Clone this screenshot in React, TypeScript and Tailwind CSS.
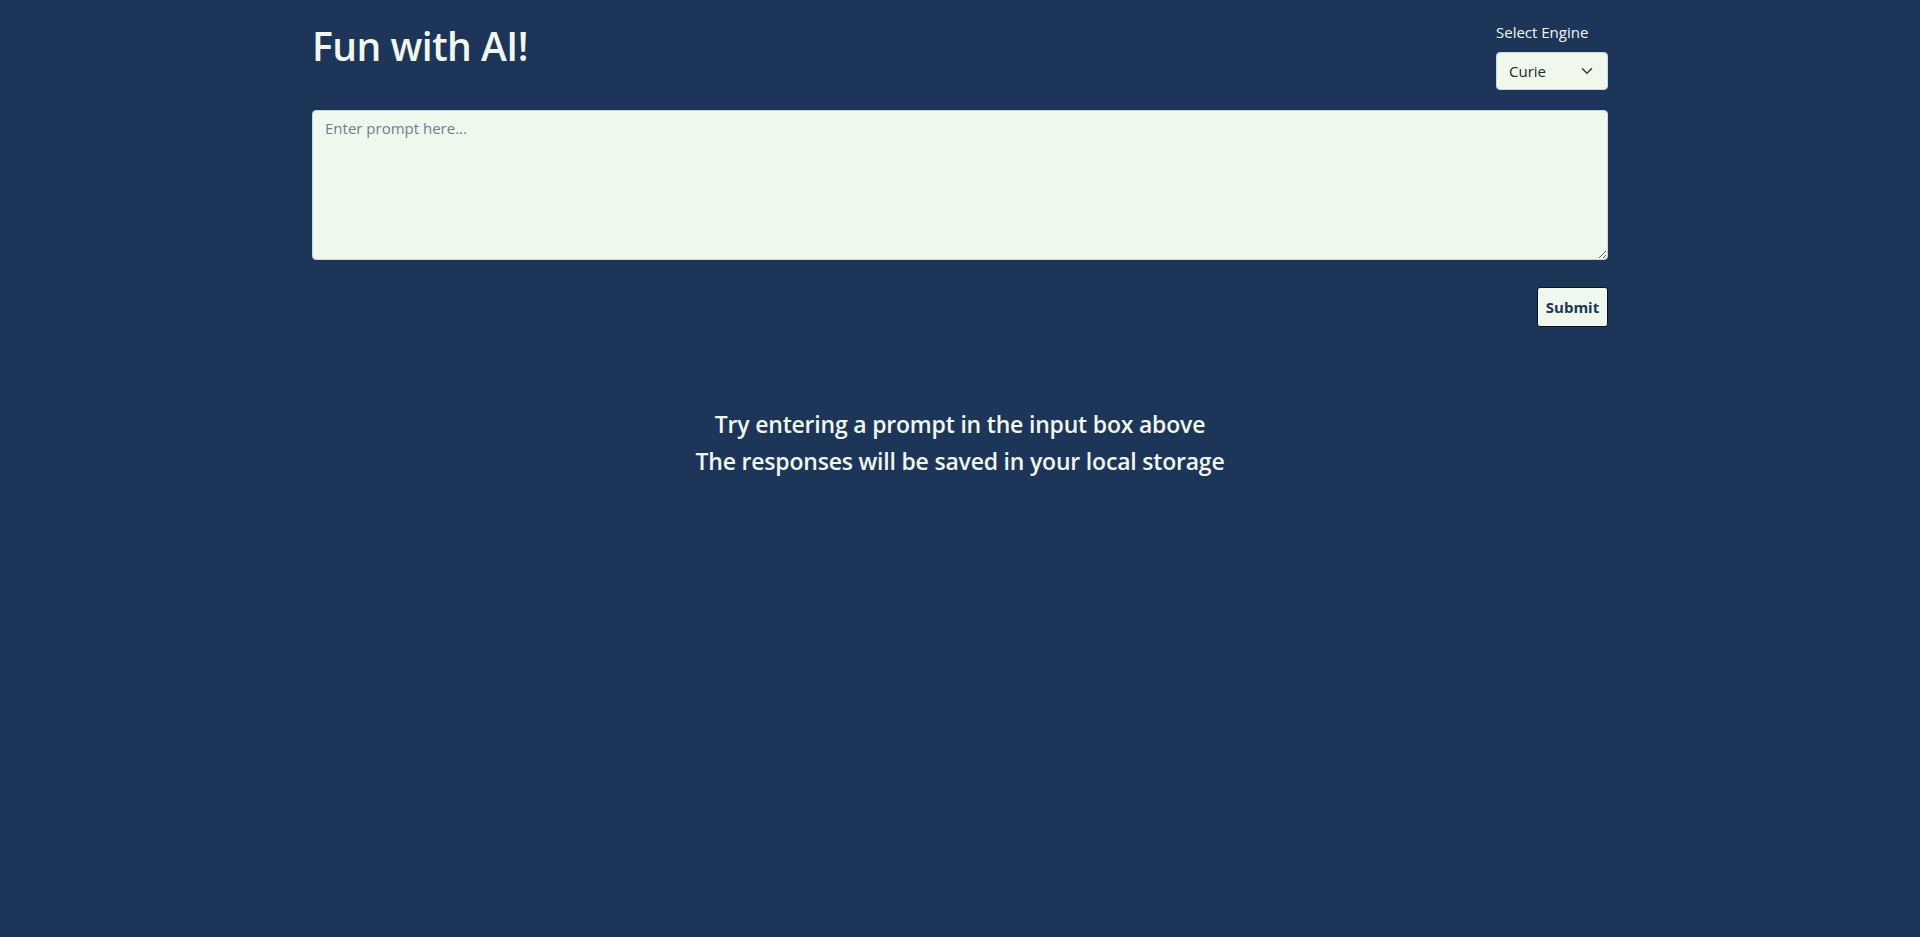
import React from "react";

export default function App() {
  return (
    <div
      className="min-h-screen w-full bg-[#1e355a] text-[#f0f8ee]"
      style={{ fontFamily: '"Open Sans", "Noto Sans", sans-serif' }}
    >
      <div className="mx-auto max-w-[1320px] px-3">
        <div className="flex items-start justify-between pt-5">
          <h1 className="mt-[2px] text-[39px] font-semibold leading-[48px] tracking-[-0.5px]">Fun with AI!</h1>
          <div className="flex flex-col">
            <label className="mb-2 text-[15px] leading-6">Select Engine</label>
            <div className="relative flex h-[38px] w-[112px] items-center rounded-[4px] border border-[#ced4da] bg-[#f0f8ee] pl-3 text-[15px] text-[#212529]">
              Curie
              <svg
                className="absolute right-3 top-1/2 -translate-y-1/2"
                width="16"
                height="12"
                viewBox="0 0 16 16"
                fill="none"
                stroke="#343a40"
                strokeWidth="2"
                strokeLinecap="round"
                strokeLinejoin="round"
              >
                <path d="m2 5 6 6 6-6" />
              </svg>
            </div>
          </div>
        </div>
        <textarea
          className="mt-5 block h-[150px] w-full rounded-[4px] border border-[#ced4da] bg-[#eff8ec] px-3 py-1.5 text-[15px] text-[#212529] placeholder:text-[#6c7f8e] outline-none"
          placeholder="Enter prompt here..."
        />
        <div className="mt-[27px] flex justify-end">
          <button className="h-10 w-[71px] rounded-[3px] border border-[#0b1320] bg-[#f0f8ee] text-[15px] font-bold text-[#1e355a]">
            Submit
          </button>
        </div>
        <div className="mt-[82px] flex flex-col items-center gap-[7px] text-[23px] font-semibold leading-[30px] tracking-[-0.2px]">
          <div>Try entering a prompt in the input box above</div>
          <div>The responses will be saved in your local storage</div>
        </div>
      </div>
    </div>
  );
}
